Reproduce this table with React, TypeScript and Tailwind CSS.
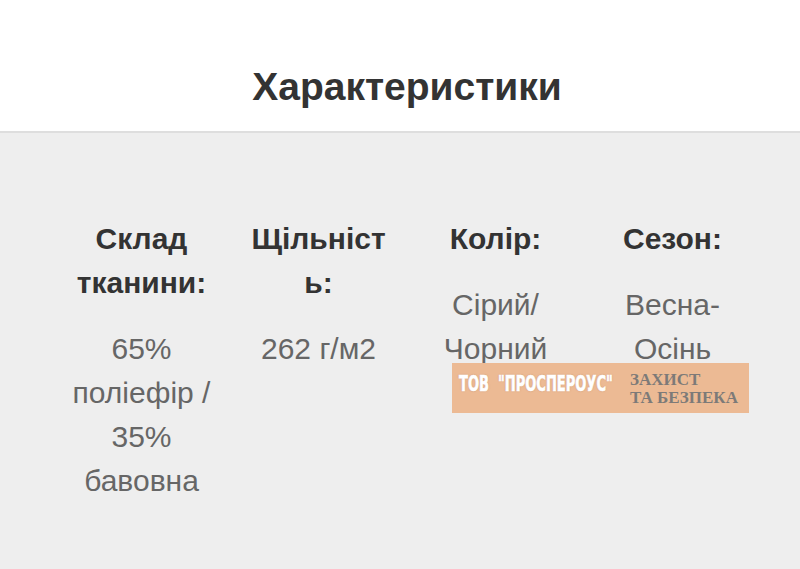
const specs = [
  { label: "Склад тканини:", value: "65% поліефір / 35% бавовна" },
  { label: "Щільність:", value: "262 г/м2" },
  { label: "Колір:", value: "Сірий/ Чорний" },
  { label: "Сезон:", value: "Весна-Осінь" },
];

const App = () => {
  return (
    <div className="relative min-h-[569px] bg-[#eeeeee] font-['Liberation_Sans',Arial,sans-serif]">
      {/* Header */}
      <header className="bg-white h-[133px] border-b-2 border-[#dedede] flex justify-center pt-[67px] pl-[14px]">
        <h1 className="text-[39px] leading-[40px] h-[40px] font-bold text-[#333333]">Характеристики</h1>
      </header>

      {/* Specs grid */}
      <section className="pt-[84px] pl-[14px]">
        <div className="mx-auto w-[708px] grid grid-cols-4">
          {specs.map((spec) => (
            <div key={spec.label} className="px-[14px] text-center">
              <h3 className="text-[30px] leading-[44px] font-bold text-[#333333] [overflow-wrap:anywhere]">{spec.label}</h3>
              <p className="mt-[22px] text-[30px] leading-[44px] text-[#666666]">{spec.value}</p>
            </div>
          ))}
        </div>
      </section>

      {/* Watermark */}
      <div className="absolute left-[452px] top-[363px] w-[297px] h-[50px] bg-[#ecba94] flex items-center pl-[7px]">
        <div className="w-[171px] shrink-0 -mt-[4px]">
          <span className="inline-block text-white font-bold text-[21px] leading-none scale-x-[0.69] origin-left [text-shadow:0_0_2px_rgba(150,90,60,0.6)] [-webkit-text-stroke:0.7px_white] font-['Liberation_Sans_Narrow','DejaVu_Sans_Condensed',sans-serif] whitespace-nowrap">
            ТОВ&nbsp;&nbsp;"ПРОСПЕРОУС"
          </span>
        </div>
        <span className="text-[#7d7a78] font-bold text-[17px] leading-[18px] font-['Liberation_Serif',serif] mt-[2px] whitespace-nowrap">
          ЗАХИСТ
          <br />
          ТА БЕЗПЕКА
        </span>
      </div>
    </div>
  );
};

export default App;
